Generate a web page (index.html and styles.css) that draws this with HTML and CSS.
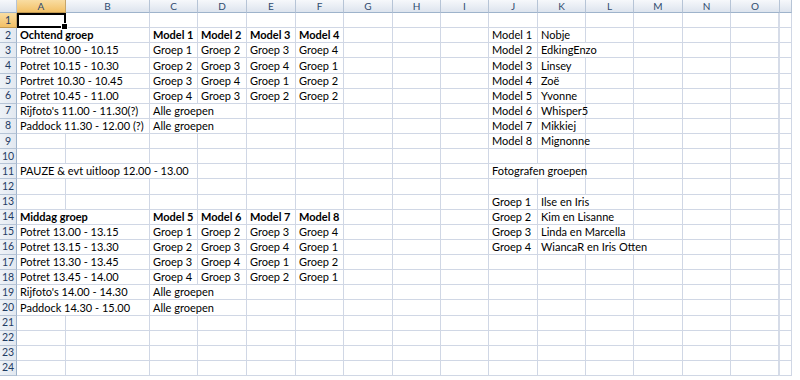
FILE: index.html
```html
<!DOCTYPE html>
<html>
<head>
<meta charset="utf-8">
<link rel="stylesheet" href="styles.css">
</head>
<body>
<div class="sheet">
  <div class="r hdr">
    <div class="corner"></div>
    <div class="ch sel">A</div><div class="ch">B</div><div class="ch">C</div><div class="ch">D</div><div class="ch">E</div><div class="ch">F</div><div class="ch">G</div><div class="ch">H</div><div class="ch">I</div><div class="ch">J</div><div class="ch">K</div><div class="ch">L</div><div class="ch">M</div><div class="ch">N</div><div class="ch">O</div><div class="ch"></div>
  </div>
  <div class="r">
    <div class="h sel">1</div><div class="active"></div><div></div><div></div><div></div><div></div><div></div><div></div><div></div><div></div><div></div><div></div><div></div><div></div><div></div><div class="o"></div><div></div>
  </div>
  <div class="r">
    <div class="h">2</div><div class="s2 b">Ochtend groep</div><div class="b">Model 1</div><div class="b">Model 2</div><div class="b">Model 3</div><div class="b">Model 4</div><div></div><div></div><div></div><div>Model 1</div><div>Nobje</div><div></div><div></div><div></div><div class="o"></div><div></div>
  </div>
  <div class="r">
    <div class="h">3</div><div class="s2">Potret 10.00 - 10.15</div><div>Groep 1</div><div>Groep 2</div><div>Groep 3</div><div>Groep 4</div><div></div><div></div><div></div><div>Model 2</div><div class="s2">EdkingEnzo</div><div></div><div></div><div class="o"></div><div></div>
  </div>
  <div class="r">
    <div class="h">4</div><div class="s2">Potret 10.15 - 10.30</div><div>Groep 2</div><div>Groep 3</div><div>Groep 4</div><div>Groep 1</div><div></div><div></div><div></div><div>Model 3</div><div>Linsey</div><div></div><div></div><div></div><div class="o"></div><div></div>
  </div>
  <div class="r">
    <div class="h">5</div><div class="s2">Portret 10.30 - 10.45</div><div>Groep 3</div><div>Groep 4</div><div>Groep 1</div><div>Groep 2</div><div></div><div></div><div></div><div>Model 4</div><div>Zoë</div><div></div><div></div><div></div><div class="o"></div><div></div>
  </div>
  <div class="r">
    <div class="h">6</div><div class="s2">Potret 10.45 - 11.00</div><div>Groep 4</div><div>Groep 3</div><div>Groep 2</div><div>Groep 2</div><div></div><div></div><div></div><div>Model 5</div><div>Yvonne</div><div></div><div></div><div></div><div class="o"></div><div></div>
  </div>
  <div class="r">
    <div class="h">7</div><div class="s2">Rijfoto's 11.00 - 11.30(?)</div><div class="s2">Alle groepen</div><div></div><div></div><div></div><div></div><div></div><div>Model 6</div><div>Whisper5</div><div></div><div></div><div></div><div class="o"></div><div></div>
  </div>
  <div class="r">
    <div class="h">8</div><div class="s2">Paddock 11.30 - 12.00 (?)</div><div class="s2">Alle groepen</div><div></div><div></div><div></div><div></div><div></div><div>Model 7</div><div>Mikkiej</div><div></div><div></div><div></div><div class="o"></div><div></div>
  </div>
  <div class="r">
    <div class="h">9</div><div></div><div></div><div></div><div></div><div></div><div></div><div></div><div></div><div></div><div>Model 8</div><div>Mignonne</div><div></div><div></div><div></div><div class="o"></div><div></div>
  </div>
  <div class="r">
    <div class="h">10</div><div></div><div></div><div></div><div></div><div></div><div></div><div></div><div></div><div></div><div></div><div></div><div></div><div></div><div></div><div class="o"></div><div></div>
  </div>
  <div class="r">
    <div class="h">11</div><div class="s3">PAUZE &amp; evt uitloop 12.00 - 13.00</div><div></div><div></div><div></div><div></div><div></div><div></div><div class="s2">Fotografen groepen</div><div></div><div></div><div></div><div class="o"></div><div></div>
  </div>
  <div class="r">
    <div class="h">12</div><div></div><div></div><div></div><div></div><div></div><div></div><div></div><div></div><div></div><div></div><div></div><div></div><div></div><div></div><div class="o"></div><div></div>
  </div>
  <div class="r">
    <div class="h">13</div><div></div><div></div><div></div><div></div><div></div><div></div><div></div><div></div><div></div><div>Groep 1</div><div class="s2">Ilse en Iris</div><div></div><div></div><div class="o"></div><div></div>
  </div>
  <div class="r">
    <div class="h">14</div><div class="s2 b">Middag groep</div><div class="b">Model 5</div><div class="b">Model 6</div><div class="b">Model 7</div><div class="b">Model 8</div><div></div><div></div><div></div><div>Groep 2</div><div class="s2">Kim en Lisanne</div><div></div><div></div><div class="o"></div><div></div>
  </div>
  <div class="r">
    <div class="h">15</div><div class="s2">Potret 13.00 - 13.15</div><div>Groep 1</div><div>Groep 2</div><div>Groep 3</div><div>Groep 4</div><div></div><div></div><div></div><div>Groep 3</div><div class="s2">Linda en Marcella</div><div></div><div></div><div class="o"></div><div></div>
  </div>
  <div class="r">
    <div class="h">16</div><div class="s2">Potret 13.15 - 13.30</div><div>Groep 2</div><div>Groep 3</div><div>Groep 4</div><div>Groep 1</div><div></div><div></div><div></div><div>Groep 4</div><div class="s3">WiancaR en Iris Otten</div><div></div><div class="o"></div><div></div>
  </div>
  <div class="r">
    <div class="h">17</div><div class="s2">Potret 13.30 - 13.45</div><div>Groep 3</div><div>Groep 4</div><div>Groep 1</div><div>Groep 2</div><div></div><div></div><div></div><div></div><div></div><div></div><div></div><div></div><div class="o"></div><div></div>
  </div>
  <div class="r">
    <div class="h">18</div><div class="s2">Potret 13.45 - 14.00</div><div>Groep 4</div><div>Groep 3</div><div>Groep 2</div><div>Groep 1</div><div></div><div></div><div></div><div></div><div></div><div></div><div></div><div></div><div class="o"></div><div></div>
  </div>
  <div class="r">
    <div class="h">19</div><div class="s2">Rijfoto's 14.00 - 14.30</div><div class="s2">Alle groepen</div><div></div><div></div><div></div><div></div><div></div><div></div><div></div><div></div><div></div><div></div><div class="o"></div><div></div>
  </div>
  <div class="r">
    <div class="h">20</div><div class="s2">Paddock 14.30 - 15.00</div><div class="s2">Alle groepen</div><div></div><div></div><div></div><div></div><div></div><div></div><div></div><div></div><div></div><div></div><div class="o"></div><div></div>
  </div>
  <div class="r">
    <div class="h">21</div><div></div><div></div><div></div><div></div><div></div><div></div><div></div><div></div><div></div><div></div><div></div><div></div><div></div><div></div><div class="o"></div><div></div>
  </div>
  <div class="r">
    <div class="h">22</div><div></div><div></div><div></div><div></div><div></div><div></div><div></div><div></div><div></div><div></div><div></div><div></div><div></div><div></div><div class="o"></div><div></div>
  </div>
  <div class="r">
    <div class="h">23</div><div></div><div></div><div></div><div></div><div></div><div></div><div></div><div></div><div></div><div></div><div></div><div></div><div></div><div></div><div class="o"></div><div></div>
  </div>
  <div class="r">
    <div class="h">24</div><div></div><div></div><div></div><div></div><div></div><div></div><div></div><div></div><div></div><div></div><div></div><div></div><div></div><div></div><div class="o"></div><div></div>
  </div>
</div>
</body>
</html>
```
FILE: styles.css
```css
* { box-sizing: border-box; }
html, body {
  margin: 0;
  padding: 0;
  background: #ffffff;
  overflow: hidden;
}
body {
  width: 800px;
  height: 380px;
  font-family: Lato, "Open Sans", sans-serif;
  font-size: 11px;
  color: #000;
}
.sheet {
  width: 792px;
}
.r {
  display: grid;
  grid-template-columns: 17px 49px 84px 48px 49px 49px 48px 49px 48px 48px 49px 48px 48px 49px 48px 49px 12px;
  height: 15.125px;
}
.r > div {
  border-right: 1px solid #d0d7e5;
  border-bottom: 1px solid #d0d7e5;
  display: flex;
  align-items: flex-end;
  padding: 0 0 1px 3px;
  line-height: 13px;
  white-space: nowrap;
  overflow: visible;
  min-width: 0;
}
.r > .o {
  border-right: 2px solid #d6dce8;
}
.hdr { height: 13px; }
.hdr > div {
  background: linear-gradient(#f6f8fb, #dde4ee);
  border-right: 1px solid #b6c4d6;
  border-bottom: 1px solid #9eb3cb;
  justify-content: center;
  align-items: center;
  padding: 0;
  color: #2f4a6e;
  font-size: 10px;
  line-height: 12px;
}
.hdr > .sel, .r > .h.sel {
  background: linear-gradient(#f9dda2, #f2c066);
  border-right-color: #c5a56a;
  border-bottom-color: #c29a52;
}
.corner {
  background:
    linear-gradient(135deg, transparent 50%, #c4cdd9 50%) no-repeat right 2px bottom 2px / 9px 9px,
    linear-gradient(#f6f8fb, #dde4ee);
}
.r > .h {
  background: linear-gradient(90deg, #eef2f7, #e2e8f0);
  border-right: 1px solid #9eb3cb;
  border-bottom: 1px solid #b6c4d6;
  justify-content: center;
  align-items: center;
  padding: 0;
  color: #1f3b63;
  font-size: 10.5px;
}
.s2 { grid-column: span 2; }
.s3 { grid-column: span 3; }
.b { font-weight: bold; }
.active {
  position: relative;
  outline: 2px solid #000;
  outline-offset: -2px;
}
.active::after {
  content: "";
  position: absolute;
  right: -3px;
  bottom: -3px;
  width: 5px;
  height: 5px;
  background: #000;
  border: 1px solid #fff;
}
```
